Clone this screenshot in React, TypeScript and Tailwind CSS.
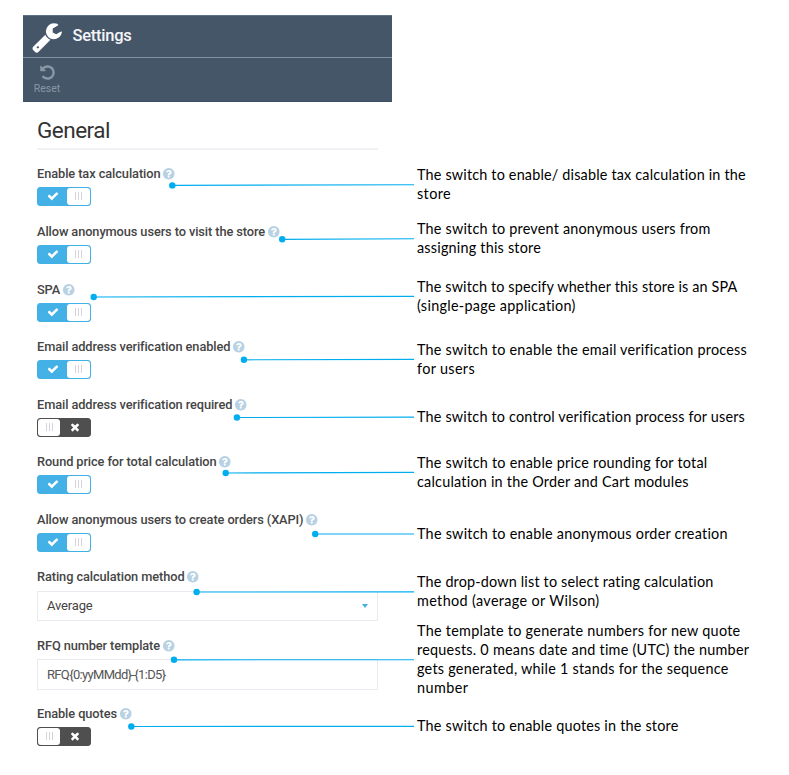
import { useLayoutEffect, useRef, useState } from "react";

const paths = {
  wrench:
    "M448 1472q0-26-19-45t-45-19-45 19-19 45 19 45 45 19 45-19 19-45zm644-420l-682 682q-37 37-90 37-52 0-91-37l-106-108q-38-36-38-90 0-53 38-91l681-681q39 98 114.5 173.5t173.5 114.5zm634-435q0 39-23 106-47 134-164.5 217.5t-258.5 83.5q-185 0-316.5-131.5t-131.5-316.5 131.5-316.5 316.5-131.5q58 0 121.5 16.5t107.5 46.5q16 11 16 28t-16 28l-293 169v224l193 107q5-3 79-48.5t135.5-81 70.5-35.5q15 0 23.5 10t8.5 25z",
  undo: "M1664 896q0 156-61 298t-164 245-245 164-298 61q-172 0-327-72.5t-264-204.5q-7-10-6.5-22.5t8.5-20.5l137-138q10-9 25-9 16 2 23 12 73 95 179 147t225 52q104 0 198.5-40.5t163.5-109.5 109.5-163.5 40.5-198.5-40.5-198.5-109.5-163.5-163.5-109.5-198.5-40.5q-98 0-188 35.5t-160 101.5l137 138q31 30 14 69-17 40-59 40h-448q-26 0-45-19t-19-45v-448q0-42 40-59 39-17 69 14l130 129q107-101 244.5-156.5t284.5-55.5q156 0 298 61t245 164 164 245 61 298z",
  help: "M1024 1376v-192q0-14-9-23t-23-9h-192q-14 0-23 9t-9 23v192q0 14 9 23t23 9h192q14 0 23-9t9-23zm256-672q0-88-55.5-163t-138.5-116-170-41q-243 0-371 213-15 24 8 42l132 100q7 6 19 6 16 0 25-12 53-68 86-92 34-24 86-24 48 0 85.5 26t37.5 59q0 38-20 61t-68 45q-63 28-115.5 86.5t-52.5 125.5v36q0 14 9 23t23 9h192q14 0 23-9t9-23q0-19 21.5-49.5t54.5-49.5q32-18 49-28.5t46-35 44.5-48 28-60.5 12.5-81zm384 192q0 209-103 385.5t-279.5 279.5-385.5 103-385.5-103-279.5-279.5-103-385.5 103-385.5 279.5-279.5 385.5-103 385.5 103 279.5 279.5 103 385.5z",
  check:
    "M1671 566q0 40-28 68l-724 724-136 136q-28 28-68 28t-68-28l-136-136-362-362q-28-28-28-68t28-68l136-136q28-28 68-28t68 28l294 295 656-657q28-28 68-28t68 28l136 136q28 28 28 68z",
  times:
    "M1490 1322q0 40-28 68l-136 136q-28 28-68 28t-68-28l-294-294-294 294q-28 28-68 28t-68-28l-136-136q-28-28-28-68t28-68l294-294-294-294q-28-28-28-68t28-68l136-136q28-28 68-28t68 28l294 294 294-294q28-28 68-28t68 28l136 136q28 28 28 68t-28 68l-294 294 294 294q28 28 28 68z",
};

function Icon({ name, className }: { name: keyof typeof paths; className: string }) {
  return (
    <svg viewBox="0 0 1792 1792" fill="currentColor" className={`shrink-0 ${className}`}>
      <path d={paths[name]} />
    </svg>
  );
}

/** Single line of text whose tracking is adjusted so that it spans `width` pixels. */
function Line({ text, width }: { text: string; width: number }) {
  const ref = useRef<HTMLSpanElement>(null);
  const [spacing, setSpacing] = useState(0);
  useLayoutEffect(() => {
    const natural = ref.current?.getBoundingClientRect().width ?? width;
    setSpacing((width - natural) / text.length);
  }, [text, width]);
  return (
    <span ref={ref} className="inline-block whitespace-pre" style={{ letterSpacing: spacing }}>
      {text}
    </span>
  );
}

const Grip = () => (
  <span className="flex h-[8px] gap-[2px]">
    <i className="w-px bg-[#d5d3de]" />
    <i className="w-px bg-[#d5d3de]" />
    <i className="w-px bg-[#d5d3de]" />
  </span>
);

function Toggle({ on }: { on: boolean }) {
  return on ? (
    <div className="flex h-[18.5px] w-[54px] rounded-[3px] border border-[#43b0e6] bg-[#43b0e6]">
      <div className="flex w-[29px] items-center justify-center pb-px text-white">
        <Icon name="check" className="size-[12px]" />
      </div>
      <div className="flex flex-1 items-center justify-center rounded-[3px] bg-white pb-px">
        <Grip />
      </div>
    </div>
  ) : (
    <div className="flex h-[18.5px] w-[54px] rounded-[3px] border border-[#4f4f4f] bg-[#4f4f4f]">
      <div className="flex w-[22px] items-center justify-center rounded-[3px] bg-white pb-px">
        <Grip />
      </div>
      <div className="flex flex-1 items-center justify-center pb-px pr-px text-white">
        <Icon name="times" className="size-[12px]" />
      </div>
    </div>
  );
}

type Setting = { label: string; width: number; kind: "on" | "off" | "select" | "input"; h: string };

const settings: Setting[] = [
  { label: "Enable tax calculation", width: 123.5, kind: "on", h: "h-[58px]" },
  { label: "Allow anonymous users to visit the store", width: 228, kind: "on", h: "h-[58px]" },
  { label: "SPA", width: 23, kind: "on", h: "h-[57px]" },
  { label: "Email address verification enabled", width: 193, kind: "on", h: "h-[58px]" },
  { label: "Email address verification required", width: 195, kind: "off", h: "h-[57px]" },
  { label: "Round price for total calculation", width: 179.5, kind: "on", h: "h-[58px]" },
  { label: "Allow anonymous users to create orders (XAPI)", width: 266.5, kind: "on", h: "h-[57px]" },
  { label: "Rating calculation method", width: 147.5, kind: "select", h: "h-[69px]" },
  { label: "RFQ number template", width: 123, kind: "input", h: "h-[68px]" },
  { label: "Enable quotes", width: 80, kind: "off", h: "h-[58px]" },
];

const notes: { mt: string; lines: [string, number][] }[] = [
  { mt: "mt-[165px]", lines: [["The switch to enable/ disable tax calculation in the", 329], ["store", 34]] },
  { mt: "mt-[16px]", lines: [["The switch to prevent anonymous users from", 293.5], ["assigning this store", 124]] },
  { mt: "mt-[20px]", lines: [["The switch to specify whether this store is an SPA", 320.5], ["(single-page application)", 159]] },
  { mt: "mt-[25px]", lines: [["The switch to enable the email verification process", 330], ["for users", 58]] },
  { mt: "mt-[29px]", lines: [["The switch to control verification process for users", 328]] },
  { mt: "mt-[27px]", lines: [["The switch to enable price rounding for total", 290.5], ["calculation in the Order and Cart modules", 272]] },
  { mt: "mt-[33px]", lines: [["The switch to enable anonymous order creation", 311]] },
  { mt: "mt-[29px]", lines: [["The drop-down list to select rating calculation", 297], ["method (average or Wilson)", 182.5]] },
  {
    mt: "mt-[11px]",
    lines: [
      ["The template to generate numbers for new quote", 323.5],
      ["requests. 0 means date and time (UTC) the number", 332.5],
      ["gets generated, while 1 stands for the sequence", 311.5],
      ["number", 51.5],
    ],
  },
  { mt: "mt-[19px]", lines: [["The switch to enable quotes in the store", 261.5]] },
];

// Leader lines: dot x, y at the dot, y at the note
const leaders = [
  [172.3, 185.4, 184.7],
  [282.2, 239.3, 238.7],
  [93.7, 297, 296.4],
  [243.9, 359.8, 359.4],
  [236.9, 417.5, 417.1],
  [225.7, 473, 472.4],
  [315.2, 534, 534],
  [196.6, 592, 591.9],
  [174, 659.8, 659.7],
  [131.3, 726.5, 726.3],
];

export default function App() {
  return (
    <div className="relative flex h-[775px] w-[789px] overflow-hidden bg-white">
      <section className="w-[417px] pl-[23px] pt-[15px] font-['Roboto',sans-serif]">
        <header className="h-[87px] w-[369px] border-y border-[#3d4f66] border-t-[#5d7288] bg-[#465669]">
          <div className="flex h-[42px] items-center border-b border-[#8093a4] pl-[8px]">
            <Icon name="wrench" className="size-[32px] text-white" />
            <h1 className="ml-[9.5px] mt-[-1px] text-[16.5px] font-medium leading-5 text-[#f3f5f7]">
              <Line text="Settings" width={59} />
            </h1>
          </div>
          <div className="flex w-[48px] flex-col items-center pt-[6px] text-[#8996a5]">
            <Icon name="undo" className="size-[17px]" />
            <span className="mt-[2px] text-[10.5px] leading-3">
              <Line text="Reset" width={26.5} />
            </span>
          </div>
        </header>
        <div className="ml-[14px] w-[341px]">
          <h2 className="h-[48px] border-b-2 border-[#f1f2f6] pt-[15px] text-[22.5px] leading-[26px] text-[#333]">
            <Line text="General" width={73} />
          </h2>
          <div className="pt-[16px]">
            {settings.map((s) => (
              <div key={s.label} className={s.h}>
                <div className="flex h-[16px] items-center text-[12.8px] font-medium leading-4 text-[#454545]">
                  <Line text={s.label} width={s.width} />
                  <Icon name="help" className="ml-[1.5px] size-[13.5px] text-[#b8d2e3]" />
                </div>
                {s.kind === "select" && (
                  <div className="mt-[6px] flex h-[30px] items-center justify-between border border-[#e9ebf1] px-[9px] text-[13px] text-[#444]">
                    <Line text="Average" width={45.5} />
                    <span className="mb-px size-0 border-x-[3px] border-t-[4px] border-x-transparent border-t-[#43b0e6]" />
                  </div>
                )}
                {s.kind === "input" && (
                  <div className="mt-[5px] flex h-[31px] items-center border border-[#e9ebf1] pl-[9px] text-[13px] text-[#555]">
                    <Line text="RFQ{0:yyMMdd}-{1:D5}" width={118.5} />
                  </div>
                )}
                {(s.kind === "on" || s.kind === "off") && (
                  <div className="pt-[5px]">
                    <Toggle on={s.kind === "on"} />
                  </div>
                )}
              </div>
            ))}
          </div>
        </div>
      </section>
      <aside className="flex flex-col font-['Lato',sans-serif] text-[14.4px] text-black">
        {notes.map((n) => (
          <p key={n.lines[0][0]} className={n.mt}>
            {n.lines.map(([text, width]) => (
              <span key={text} className="block h-[19px] leading-[19px]">
                <Line text={text} width={width} />
              </span>
            ))}
          </p>
        ))}
      </aside>
      <svg className="pointer-events-none absolute inset-0" width="789" height="775">
        {leaders.map(([x, y, end]) => (
          <g key={y}>
            <line x1={x} y1={y} x2={414} y2={end} stroke="#00aeef" strokeWidth="1.15" />
            <circle cx={x} cy={y} r="3.2" fill="#00aeef" />
          </g>
        ))}
      </svg>
    </div>
  );
}
